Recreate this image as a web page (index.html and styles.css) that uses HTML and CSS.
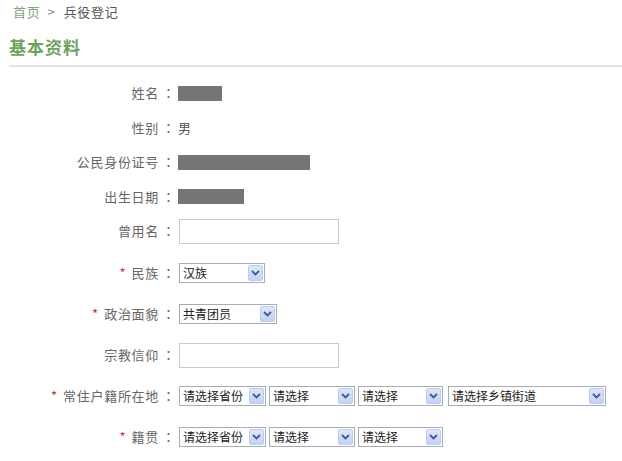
FILE: index.html
```html
<!DOCTYPE html>
<html>
<head>
<meta charset="utf-8">
<link rel="stylesheet" href="styles.css">
</head>
<body>
<div class="crumb"><a class="home">首页</a><span class="sep">&gt;</span><span class="cur">兵役登记</span></div>
<h2 class="title">基本资料</h2>
<div class="form">
  <div class="row"><label class="lbl">姓名<span class="colon">：</span></label><span class="mask w44"></span></div>
  <div class="row"><label class="lbl">性别<span class="colon">：</span></label><span class="val">男</span></div>
  <div class="row"><label class="lbl">公民身份证号<span class="colon">：</span></label><span class="mask w132"></span></div>
  <div class="row"><label class="lbl">出生日期<span class="colon">：</span></label><span class="mask w66"></span></div>
  <div class="row"><label class="lbl">曾用名<span class="colon">：</span></label><span class="input"></span></div>
  <div class="row tall first"><label class="lbl"><i class="req">*</i>民族<span class="colon">：</span></label>
    <span class="sel w86"><span class="txt">汉族</span><span class="btn"><svg viewBox="0 0 9 6" width="9" height="6"><path d="M1 1 L4.5 4.5 L8 1" fill="none" stroke="#3f5b8f" stroke-width="1.8"/></svg></span></span>
  </div>
  <div class="row tall"><label class="lbl"><i class="req">*</i>政治面貌<span class="colon">：</span></label>
    <span class="sel w98"><span class="txt">共青团员</span><span class="btn"><svg viewBox="0 0 9 6" width="9" height="6"><path d="M1 1 L4.5 4.5 L8 1" fill="none" stroke="#3f5b8f" stroke-width="1.8"/></svg></span></span>
  </div>
  <div class="row tall"><label class="lbl">宗教信仰<span class="colon">：</span></label><span class="input"></span></div>
  <div class="row tall"><label class="lbl"><i class="req">*</i>常住户籍所在地<span class="colon">：</span></label>
    <div class="sels">
      <span class="sel w87"><span class="txt">请选择省份</span><span class="btn"><svg viewBox="0 0 9 6" width="9" height="6"><path d="M1 1 L4.5 4.5 L8 1" fill="none" stroke="#3f5b8f" stroke-width="1.8"/></svg></span></span>
      <span class="sel w86"><span class="txt">请选择</span><span class="btn"><svg viewBox="0 0 9 6" width="9" height="6"><path d="M1 1 L4.5 4.5 L8 1" fill="none" stroke="#3f5b8f" stroke-width="1.8"/></svg></span></span>
      <span class="sel w85"><span class="txt">请选择</span><span class="btn"><svg viewBox="0 0 9 6" width="9" height="6"><path d="M1 1 L4.5 4.5 L8 1" fill="none" stroke="#3f5b8f" stroke-width="1.8"/></svg></span></span>
      <span class="sel w158"><span class="txt">请选择乡镇街道</span><span class="btn"><svg viewBox="0 0 9 6" width="9" height="6"><path d="M1 1 L4.5 4.5 L8 1" fill="none" stroke="#3f5b8f" stroke-width="1.8"/></svg></span></span>
    </div>
  </div>
  <div class="row tall"><label class="lbl"><i class="req">*</i>籍贯<span class="colon">：</span></label>
    <div class="sels">
      <span class="sel w87"><span class="txt">请选择省份</span><span class="btn"><svg viewBox="0 0 9 6" width="9" height="6"><path d="M1 1 L4.5 4.5 L8 1" fill="none" stroke="#3f5b8f" stroke-width="1.8"/></svg></span></span>
      <span class="sel w86"><span class="txt">请选择</span><span class="btn"><svg viewBox="0 0 9 6" width="9" height="6"><path d="M1 1 L4.5 4.5 L8 1" fill="none" stroke="#3f5b8f" stroke-width="1.8"/></svg></span></span>
      <span class="sel w85"><span class="txt">请选择</span><span class="btn"><svg viewBox="0 0 9 6" width="9" height="6"><path d="M1 1 L4.5 4.5 L8 1" fill="none" stroke="#3f5b8f" stroke-width="1.8"/></svg></span></span>
    </div>
  </div>
</div>
</body>
</html>
```
FILE: styles.css
```css
html, body { margin: 0; padding: 0; background: #fff; }
body {
  font-family: "Noto Sans CJK SC", "DejaVu Sans", sans-serif;
  font-size: 12px;
  color: #666;
  overflow: hidden;
}
.crumb {
  padding: 3px 0 0 13px;
  height: 21px;
  line-height: 18px;
  font-size: 13px;
  letter-spacing: 0.7px;
}
.home { color: #89a57c; }
.sep { color: #888; margin: 0 9px 0 7px; letter-spacing: 0; }
.cur { color: #555; }
.title {
  margin: 0 0 0 9px;
  padding: 9px 0 0 0;
  height: 32px;
  line-height: 28px;
  font-size: 17px;
  letter-spacing: 1px;
  font-weight: bold;
  color: #6aa45a;
  border-bottom: 2px solid #e3e3e3;
  box-sizing: content-box;
}
.form { padding-top: 9px; }
.row {
  display: flex;
  align-items: center;
  height: 34.5px;
}
.row.tall { height: 41px; }
.row.first { margin-top: 4px; }
.lbl {
  width: 172px;
  text-align: right;
  color: #666;
  flex: none;
  margin-right: 6px;
  line-height: 16px;
  white-space: nowrap;
  font-size: 13px;
  letter-spacing: 0.7px;
}
.colon {
  display: inline-block;
  width: 10px;
  padding-left: 3px;
  text-align: center;
  letter-spacing: 0;
  font-family: "Noto Sans CJK TC", sans-serif;
}
.req {
  font-style: normal;
  color: #c0392b;
  margin-right: 6px;
  font-size: 13px;
  letter-spacing: 0;
}
.val { color: #555; font-size: 13px; }
.mask { display: block; height: 15px; background: #757575; }
.w44 { width: 44px; }
.w132 { width: 132px; }
.w66 { width: 66px; }
.input {
  display: block;
  margin-left: 1px;
  width: 158px;
  height: 23px;
  border: 1px solid #c9c9c9;
  background: #fff;
}
.sels { display: flex; gap: 3px; margin-left: 1px; }
.row > .sel { margin-left: 1px; }
.sel {
  display: flex;
  align-items: center;
  justify-content: space-between;
  box-sizing: border-box;
  height: 20px;
  border: 1px solid #a7adb6;
  background: #fff;
  padding: 0 1px 0 3px;
  flex: none;
}
.w85 { width: 85px; }
.w86 { width: 86px; }
.w87 { width: 87px; }
.w98 { width: 98px; }
.w158 { width: 158px; margin-left: 2px; }
.txt { color: #222; font-size: 12px; line-height: 16px; white-space: nowrap; }
.btn {
  display: flex;
  align-items: center;
  justify-content: center;
  width: 15px;
  height: 16px;
  box-sizing: border-box;
  border: 1px solid #bccbef;
  border-radius: 2px;
  background: linear-gradient(#dde6fb, #c2d2f6);
}
```
